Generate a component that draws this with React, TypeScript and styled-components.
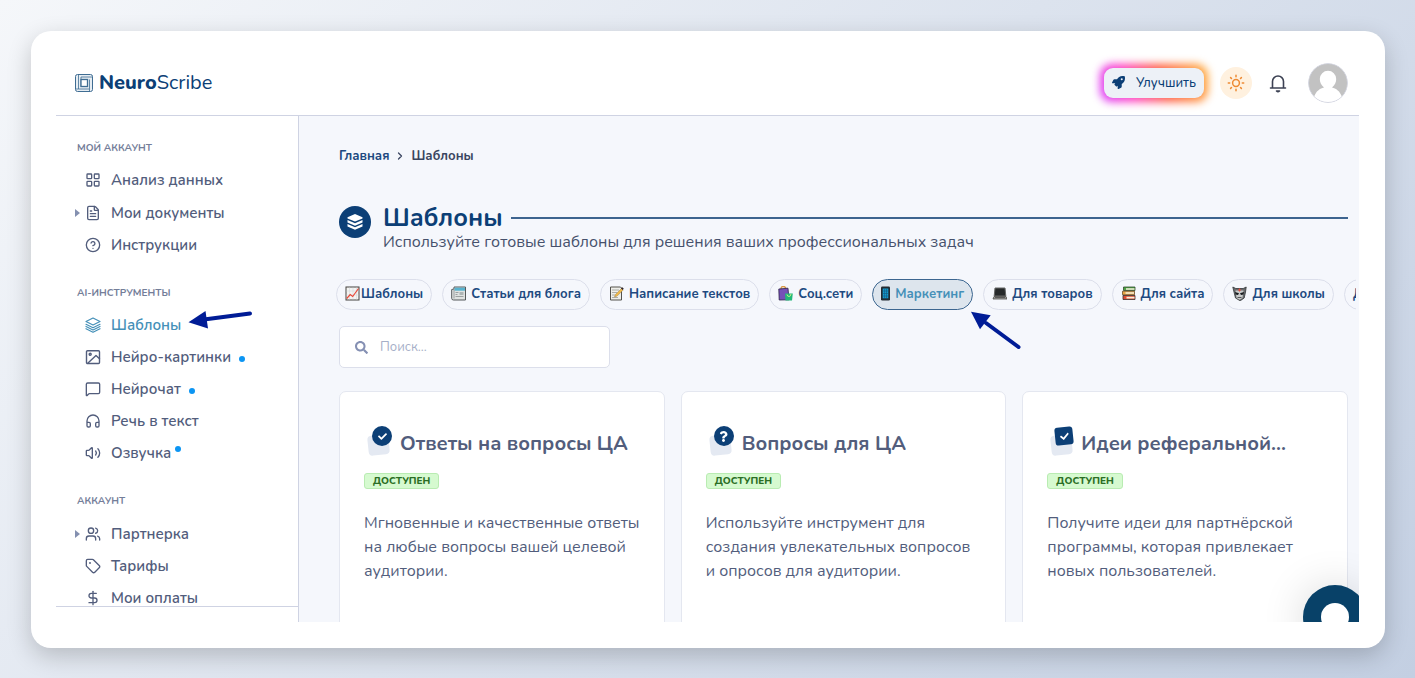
import React from "react";
import styled, { createGlobalStyle, css } from "styled-components";
import {
  ChevronRight, CircleHelp, DollarSign, FileText, Headphones, LayoutGrid,
  MessageSquare, Tag, Users, Volume2,
} from "lucide-react";
import { FaCheck, FaQuestion, FaRocket, FaSearch } from "react-icons/fa";

const navy = "#0c3f76";
const ink = "#525d7c";
const line = "#cfd3e3";
const accent = "#4590b8";
const annotation = "#001c96";

const GlobalStyle = createGlobalStyle`
  *, *::before, *::after { box-sizing: border-box; }
  body {
    margin: 0;
    font-family: Nunito, "Open Sans", "Noto Sans", sans-serif;
    color: ${ink};
  }
  button, input { font-family: inherit; }
  h1, h2, h3, p, ul, ol { margin: 0; padding: 0; }
  ul, ol { list-style: none; }
  a { color: inherit; text-decoration: none; }
`;

const Backdrop = styled.div`
  display: flex;
  height: 100vh;
  padding: 31px 30px 30px 31px;
  background: linear-gradient(135deg, #f5f7fa 0%, #c3cfe2 100%);
`;

const Frame = styled.div`
  flex: 1;
  display: flex;
  min-width: 0;
  padding: 19px 26px 26px 25px;
  border-radius: 20px;
  background: #fff;
  box-shadow: 0 8px 24px rgba(0, 0, 0, 0.2);
`;

const Shell = styled.div`
  position: relative;
  flex: 1;
  display: flex;
  flex-direction: column;
  min-width: 0;
  overflow: hidden;
`;

const Header = styled.header`
  display: flex;
  flex-shrink: 0;
  align-items: center;
  justify-content: space-between;
  height: 66px;
  padding: 0 11px 0 19px;
  border-bottom: 1px solid ${line};
`;

const Brand = styled.a`
  display: flex;
  align-items: center;
  gap: 4px;
  font-size: 20px;
  line-height: 28px;
  color: ${navy};

  b { font-weight: 800; }
`;

const HeaderActions = styled.div`
  display: flex;
  align-items: center;
`;

const UpgradeButton = styled.button`
  position: relative;
  display: flex;
  align-items: center;
  justify-content: space-between;
  width: 100px;
  height: 30px;
  margin-right: 16px;
  padding: 0 8px;
  border: 0;
  border-radius: 9px;
  background: #edf1f7;
  color: ${navy};
  font-size: 13px;
  font-weight: 500;
  isolation: isolate;

  &::before {
    content: "";
    position: absolute;
    inset: -4px;
    z-index: -2;
    border-radius: 12px;
    background: linear-gradient(70deg, #d63bff 0%, #ff3fc4 28%, #ff5f43 58%, #ffb23c 100%);
    filter: blur(4px);
  }
  &::after {
    content: "";
    position: absolute;
    inset: 0;
    z-index: -1;
    border-radius: 9px;
    background: #edf1f7;
  }
`;

const RoundButton = styled.button<{ $tint?: string; $color: string }>`
  display: grid;
  place-items: center;
  width: 32px;
  height: 32px;
  padding: 0;
  border: 0;
  border-radius: 50%;
  background: ${(p) => p.$tint ?? "transparent"};
  color: ${(p) => p.$color};
`;

const BellButton = styled(RoundButton)`
  margin: 0 14px 0 10px;
`;

const AvatarButton = styled(RoundButton)`
  width: 40px;
  height: 40px;
  overflow: hidden;
`;

const Body = styled.div`
  flex: 1;
  display: flex;
  min-height: 0;
`;

const Sidebar = styled.aside`
  display: flex;
  flex-direction: column;
  flex: 0 0 243px;
  border-right: 1px solid ${line};
`;

const Nav = styled.nav`
  flex: 1;
  display: flex;
  flex-direction: column;
  gap: 24px;
  min-height: 0;
  padding-top: 24px;
  overflow: clip;
`;

const SidebarFooter = styled.div`
  height: 16px;
  border-top: 1px solid ${line};
`;

const GroupLabel = styled.h3`
  margin-bottom: 8px;
  padding-left: 21px;
  font-size: 10px;
  line-height: 16px;
  font-weight: 700;
  text-transform: uppercase;
  color: #747e99;
`;

const NavLink = styled.a<{ $active?: boolean; $nested?: boolean }>`
  position: relative;
  display: grid;
  grid-template-columns: 10px 16px auto auto;
  justify-content: start;
  align-items: center;
  height: ${(p) => (p.$nested ? 33 : 32)}px;
  padding-left: 19px;
  font-size: 15px;
  line-height: 20px;
  font-weight: 600;
  color: ${(p) => (p.$active ? accent : ink)};
`;

const Caret = styled.span<{ $shown?: boolean }>`
  visibility: ${(p) => (p.$shown ? "visible" : "hidden")};
  width: 0;
  border: 4px solid transparent;
  border-left: 5px solid #8490b0;
  border-right: 0;
`;

const NavText = styled.span`
  padding-left: 10px;
`;

const Dot = styled.span<{ $raised?: boolean }>`
  width: 6px;
  height: 6px;
  border-radius: 50%;
  background: #0c95f3;
  ${(p) => (p.$raised
    ? css`margin: 0 0 8px 4px;`
    : css`margin: 4px 0 0 8px;`)}
`;

const NavArrow = styled.svg`
  position: absolute;
  left: 130px;
  top: -1px;
`;

const TabArrow = styled.svg`
  position: absolute;
  left: 96px;
  top: 29px;
  z-index: 1;
`;

const Main = styled.main`
  flex: 1;
  min-width: 0;
  padding: 31px 11px 0 40px;
  overflow: hidden;
  background: #f5f7fc;
`;

const Breadcrumbs = styled.ol`
  display: flex;
  align-items: center;
  gap: 5px;
  font-size: 13px;
  line-height: 18px;
  font-weight: 700;
  color: #3a4560;
`;

const Crumb = styled.li<{ $link?: boolean }>`
  display: flex;
  align-items: center;
  gap: 5px;
  color: ${(p) => (p.$link ? "#204980" : "inherit")};
`;

const PageHead = styled.div`
  display: flex;
  gap: 12px;
  margin-top: 39px;
`;

const HeadIcon = styled.span`
  display: grid;
  place-items: center;
  flex: 0 0 32px;
  height: 32px;
  margin-top: 2px;
  border-radius: 50%;
  background: ${navy};
`;

const HeadText = styled.div`
  flex: 1;
`;

const TitleRow = styled.div`
  display: flex;
  align-items: center;
  gap: 8px;

  &::after {
    content: "";
    flex: 1;
    height: 2px;
    background: #3d648f;
  }
`;

const Title = styled.h1`
  font-size: 25px;
  line-height: 28px;
  font-weight: 700;
  color: ${navy};
`;

const Subtitle = styled.p`
  font-size: 16px;
  line-height: 20px;
  color: #46516c;
`;

const Tabs = styled.div`
  display: flex;
  gap: 10px;
  margin: 27px -8px 0 -3px;
  overflow-x: clip;
`;

const Tab = styled.button<{ $active?: boolean; $tight?: boolean }>`
  position: relative;
  display: flex;
  flex-shrink: 0;
  align-items: center;
  gap: ${(p) => (p.$tight ? 1 : 5)}px;
  height: 31px;
  padding: 0 8px 2px;
  border: 1px solid ${(p) => (p.$active ? "#3c6690" : "#dcdfeb")};
  border-radius: 16px;
  background: ${(p) => (p.$active ? "#dde5ed" : "transparent")};
  color: ${(p) => (p.$active ? accent : "#204980")};
  font-size: 13px;
  font-weight: 700;
  white-space: nowrap;
`;

const SearchBox = styled.label`
  display: flex;
  align-items: center;
  gap: 12px;
  width: 271px;
  height: 42px;
  margin-top: 16px;
  padding: 0 15px;
  border: 1px solid #dcdfeb;
  border-radius: 5px;
  background: #fff;
  color: #8590b3;
`;

const SearchInput = styled.input`
  flex: 1;
  min-width: 0;
  padding: 0;
  border: 0;
  outline: 0;
  background: transparent;
  font-size: 13px;
  line-height: 20px;
  color: ${ink};

  &::placeholder { color: #a6afc8; opacity: 1; }
`;

const Cards = styled.div`
  display: grid;
  grid-template-columns: repeat(3, minmax(0, 1fr));
  gap: 16px;
  margin-top: 23px;
`;

const Card = styled.article`
  min-height: 290px;
  padding: 33px 24px 24px;
  border: 1px solid #e4e7f0;
  border-radius: 7px;
  background: #fff;
`;

const CardHead = styled.div`
  display: flex;
  align-items: center;
  gap: 8px;
  height: 32px;
  padding-left: 3px;
`;

const CardTitle = styled.h2`
  margin-top: 6px;
  font-size: 20px;
  line-height: 28px;
  font-weight: 700;
  white-space: nowrap;
  overflow: hidden;
  text-overflow: ellipsis;
`;

const CardMark = styled.span<{ $square?: boolean }>`
  position: relative;
  flex: 0 0 ${(p) => (p.$square ? 23 : 25)}px;
  height: 30px;

  &::before {
    content: "";
    position: absolute;
    left: 1px;
    bottom: 1px;
    width: 21px;
    height: 20px;
    border-radius: 4px;
    background: #e4e9f2;
    transform: rotate(-6deg);
  }
`;

const CardBadge = styled.span<{ $square?: boolean }>`
  position: absolute;
  top: ${(p) => (p.$square ? 1 : 0)}px;
  right: 0;
  display: grid;
  place-items: center;
  width: ${(p) => (p.$square ? 18 : 20)}px;
  height: ${(p) => (p.$square ? 18 : 20)}px;
  border-radius: ${(p) => (p.$square ? "3px" : "50%")};
  transform: ${(p) => (p.$square ? "rotate(-6deg)" : "none")};
  background: ${navy};
  color: #fff;
`;

const Status = styled.span`
  display: inline-block;
  vertical-align: top;
  margin-top: 16px;
  padding: 0 8px;
  border: 1px solid #b9ecb2;
  border-radius: 3px;
  background: #d6fad0;
  color: #2b6e25;
  font-size: 10px;
  line-height: 14px;
  font-weight: 800;
  text-transform: uppercase;
`;

const CardText = styled.p`
  margin-top: 22px;
  font-size: 16px;
  line-height: 24px;
`;

const ChatButton = styled.button`
  position: absolute;
  right: -8px;
  bottom: -27px;
  display: grid;
  place-items: center;
  width: 64px;
  height: 64px;
  padding: 0;
  border: 0;
  border-radius: 50%;
  background: #084168;
  box-shadow: 0 2px 44px rgba(0, 0, 0, 0.16);

  &::before {
    content: "";
    width: 28px;
    height: 28px;
    border-radius: 50%;
    background: #fff;
  }
`;

const LogoMark = () => (
  <svg width="20" height="20" viewBox="0 0 20 20" fill="none" stroke="#3f6d93" aria-hidden="true">
    <rect x="0.5" y="1.5" width="17" height="17" rx="2" fill="#e6edf3" />
    <path d="M3.500 1.500V16H14M17.500 4H6v9.500M14.500 18.500V6.500M.5 16h3" strokeWidth=".8" />
    <rect x="6" y="6.500" width="6.500" height="7" fill="#fff" strokeWidth="1.300" />
  </svg>
);

const StackIcon = () => (
  <svg width="16" height="16" viewBox="0 0 16 16" fill="none" stroke="currentColor" strokeWidth="1.200" strokeLinejoin="round" strokeLinecap="round" aria-hidden="true">
    <path d="M8 1 15 4.500 8 8 1 4.500zM1 7.300l7 3.500 7-3.500M1 9.500 8 13l7-3.500M1 11.700l7 3.500 7-3.500" />
  </svg>
);

const PictureIcon = () => (
  <svg width="16" height="16" viewBox="0 0 16 16" fill="none" stroke="currentColor" strokeWidth="1.400" strokeLinejoin="round" strokeLinecap="round" aria-hidden="true">
    <rect x="1.500" y="1.700" width="13" height="12.800" rx="1" />
    <circle cx="5.200" cy="5.200" r="1" />
    <path d="m3 14 8-7.500 3.500 3.200" />
  </svg>
);

const SunIcon = () => (
  <svg width="18" height="18" viewBox="0 0 18 18" fill="none" stroke="currentColor" strokeWidth="1.500" strokeLinecap="round" aria-hidden="true">
    <circle cx="9" cy="9" r="3.400" />
    <path d="M9 1.300v1.400M9 15.300v1.400M1.300 9h1.400M15.300 9h1.400M3.600 3.600l.9.9M13.500 13.500l.9.9M3.600 14.400l.9-.9M13.500 4.500l.9-.9" />
  </svg>
);

const BellIcon = () => (
  <svg width="20" height="20" viewBox="0 0 20 20" fill="none" stroke="currentColor" strokeWidth="1.600" strokeLinecap="round" strokeLinejoin="round" aria-hidden="true">
    <path d="M2.500 15h15M4.500 15V8.500a5.500 5.500 0 0 1 11 0V15" />
    <path d="M8.500 18a2 1.500 0 0 0 3 0z" fill="currentColor" />
  </svg>
);

const AvatarIcon = () => (
  <svg width="40" height="40" viewBox="0 0 40 40" aria-hidden="true">
    <circle cx="20" cy="20" r="19.500" fill="#c2c2c2" />
    <path d="M6 34C8 28 12 25.500 16 24.500 13 22 11.800 19 11.800 16a8.200 8.200 0 0 1 16.400 0c0 3-1.200 6-4.200 8.500 4 1 8 3.500 10 9.500a19.500 19.500 0 0 1-28 0z" fill="#fff" />
    <circle cx="20" cy="20" r="19.500" fill="none" stroke="#d5d7e2" />
  </svg>
);

const HeadStack = () => (
  <svg width="18" height="18" viewBox="0 0 18 18" fill="#fff" aria-hidden="true">
    <path d="M9 1 16.500 4.200v1.200L9 8.600 1.500 5.400V4.200zM1.500 7 9 10.200 16.500 7v2.500L9 12.700 1.500 9.500zM1.500 11.100 9 14.300l7.500-3.200v2.500L9 16.800l-7.500-3.200z" />
  </svg>
);

const emoji: Record<string, React.ReactNode> = {
  chart: (
    <>
      <rect x="1" y="1" width="13" height="13" fill="#f4f4f2" stroke="#45423e" strokeWidth="1" />
      <path d="M4.500 1.500v12M8 1.500v12M11.500 1.500v12M1.500 5h12M1.500 9h12" stroke="#d4d8da" strokeWidth=".6" />
      <path d="m1.700 12.500 3.500-4 2.500 2 5.800-8" stroke="#e94736" strokeWidth="1.200" fill="none" />
    </>
  ),
  news: (
    <>
      <path d="M3 1h11.500v13H2.500Q.7 14 .7 12.300V3.500L3 3z" fill="#dfe2e1" stroke="#55595a" />
      <path d="M3.500 1.700H14v3H3.500z" fill="#58b3cf" />
      <path d="M3 3v9.500M4.500 6.500h3M4.500 8.500h2M4.500 10.500h8" stroke="#8a9191" strokeWidth=".8" />
      <path d="M8.500 6h4v3h-4z" fill="#aeb5b5" />
    </>
  ),
  memo: (
    <>
      <path d="M1.500 1h10l1 1v12h-11z" fill="#eeeee9" stroke="#54524d" />
      <path d="M3 4h7M3 6.500h5M3 9h3M3 11.500h6" stroke="#9b9c96" strokeWidth=".8" />
      <path d="m5.500 11 1-2.500 6-6 1.600 1.600-6 6z" fill="#f0b94a" stroke="#8e6e35" strokeWidth=".4" />
      <path d="m12 2.200 1.300-1 1.500 1.500-1.200 1.200z" fill="#30262a" />
    </>
  ),
  bags: (
    <>
      <path d="M3 3q0-2.500 2.300-2.500T8 3" fill="none" stroke="#d99846" strokeWidth="1.400" />
      <path d="m.8 3 9.200-.8 1 11.600-9.800.2z" fill="#7650b8" stroke="#2b2148" strokeWidth=".8" />
      <path d="M7 7.500h7.800L14 14.500H7.500z" fill="#22b878" />
      <path d="M9 8.500q.3 2 2 2t2-2.500" fill="none" stroke="#c3ef88" />
    </>
  ),
  phone: (
    <>
      <rect x="0" y=".5" width="9" height="14" rx="1.300" fill="#222b32" />
      <path d="M1.700 2.500h5.600v9.800H1.700z" fill="#139cd0" />
      <path d="M3.600 3v9M5.500 3v9M1.700 5h5.600M1.700 7.500h5.600M1.700 10h5.600" stroke="#14577e" strokeWidth=".6" />
    </>
  ),
  laptop: (
    <>
      <path d="M3 2h10l.8 8H2.200z" fill="#26292a" stroke="#656766" />
      <path d="M2 10.500h12l1 2.500H1z" fill="#9d9d9b" stroke="#4c4c49" strokeWidth=".8" />
      <path d="M3 11.500h10" stroke="#3e3e3d" strokeWidth=".7" />
    </>
  ),
  books: (
    <>
      <path d="M2.500 1H14v3.500H2.500z" fill="#4ba243" stroke="#33492e" strokeWidth=".8" />
      <path d="M1.500 5.200h12v3.600h-12z" fill="#e7a640" stroke="#6b4b2a" strokeWidth=".8" />
      <path d="M2 9.500h12v4H2z" fill="#dd4e36" stroke="#392f2b" strokeWidth=".8" />
      <path d="M5 2.200h8.500v1.500H5zM4.500 6.300H13v1.400H4.500zM5.500 10.700h8v1.800h-8z" fill="#f6efdb" />
    </>
  ),
  mask: (
    <>
      <path d="m.8 1 3 1.500h7.400l3-1.500-.7 5-1.300 6-4 2.800-4.700-2.800L2 6z" fill="#686b6d" stroke="#323638" strokeWidth=".8" />
      <path d="M3.500 4.500h8L10.500 12l-3 1.700-3-1.700z" fill="#c7c9c9" />
      <path d="m3 6 4 1.200L6 9 3.600 8.500zM12 6 8 7.200 9 9l2.400-.5z" fill="#171b1e" />
      <path d="M7.500 2.500v3M6 4h3" stroke="#e24c3e" />
      <path d="M5.500 11.500h4" stroke="#55585a" />
    </>
  ),
};

const Emoji = ({ name }: { name: string }) => {
  const width = name === "phone" ? 9 : 15;
  return (
    <svg width={width} height="15" viewBox={`0 0 ${width} 15`} aria-hidden="true">{emoji[name]}</svg>
  );
};

const lucide = { size: 16, strokeWidth: 2 };

type NavEntry = {
  label: string;
  icon: React.ReactNode;
  nested?: boolean;
  active?: boolean;
  dot?: "low" | "raised";
};

const groups: { label: string; items: NavEntry[] }[] = [
  {
    label: "Мой аккаунт",
    items: [
      { label: "Анализ данных", icon: <LayoutGrid {...lucide} /> },
      { label: "Мои документы", icon: <FileText {...lucide} />, nested: true },
      { label: "Инструкции", icon: <CircleHelp {...lucide} /> },
    ],
  },
  {
    label: "AI-инструменты",
    items: [
      { label: "Шаблоны", icon: <StackIcon />, active: true },
      { label: "Нейро-картинки", icon: <PictureIcon />, dot: "low" },
      { label: "Нейрочат", icon: <MessageSquare {...lucide} />, dot: "low" },
      { label: "Речь в текст", icon: <Headphones {...lucide} /> },
      { label: "Озвучка", icon: <Volume2 {...lucide} />, dot: "raised" },
    ],
  },
  {
    label: "Аккаунт",
    items: [
      { label: "Партнерка", icon: <Users {...lucide} />, nested: true },
      { label: "Тарифы", icon: <Tag {...lucide} /> },
      { label: "Мои оплаты", icon: <DollarSign {...lucide} /> },
    ],
  },
];

const tabs = [
  { label: "Шаблоны", icon: "chart", tight: true },
  { label: "Статьи для блога", icon: "news" },
  { label: "Написание текстов", icon: "memo" },
  { label: "Соц.сети", icon: "bags" },
  { label: "Маркетинг", icon: "phone", active: true },
  { label: "Для товаров", icon: "laptop" },
  { label: "Для сайта", icon: "books" },
  { label: "Для школы", icon: "mask" },
  { label: "Другое" },
];

const cards = [
  {
    title: "Ответы на вопросы ЦА",
    icon: <FaCheck size={9} />,
    text: "Мгновенные и качественные ответы на любые вопросы вашей целевой аудитории.",
  },
  {
    title: "Вопросы для ЦА",
    icon: <FaQuestion size={11} />,
    text: "Используйте инструмент для создания увлекательных вопросов и опросов для аудитории.",
  },
  {
    title: "Идеи реферальной...",
    icon: <FaCheck size={9} />,
    square: true,
    text: "Получите идеи для партнёрской программы, которая привлекает новых пользователей.",
  },
];

export default function App() {
  return (
    <>
      <GlobalStyle />
      <Backdrop>
        <Frame>
          <Shell>
            <Header>
              <Brand href="#">
                <LogoMark />
                <span><b>Neuro</b>Scribe</span>
              </Brand>
              <HeaderActions>
                <UpgradeButton type="button"><FaRocket size={13} />Улучшить</UpgradeButton>
                <RoundButton type="button" aria-label="Тема" $tint="#fff1df" $color="#ee8a33"><SunIcon /></RoundButton>
                <BellButton type="button" aria-label="Уведомления" $color="#3c4153"><BellIcon /></BellButton>
                <AvatarButton type="button" aria-label="Профиль" $color="#c2c2c2"><AvatarIcon /></AvatarButton>
              </HeaderActions>
            </Header>
            <Body>
              <Sidebar>
                <Nav>
                  {groups.map((group) => (
                    <section key={group.label}>
                      <GroupLabel>{group.label}</GroupLabel>
                      <ul>
                        {group.items.map((item) => (
                          <li key={item.label}>
                            <NavLink href="#" $active={item.active} $nested={item.nested}>
                              <Caret $shown={item.nested} />
                              {item.icon}
                              <NavText>{item.label}</NavText>
                              {item.dot && <Dot $raised={item.dot === "raised"} />}
                              {item.active && (
                                <NavArrow width="70" height="24" viewBox="0 0 70 24" aria-hidden="true">
                                  <path d="M18 11.500 64 5.500" stroke={annotation} strokeWidth="4" strokeLinecap="round" />
                                  <path d="m2.500 14.300 17-11.300 2.500 17.500z" fill={annotation} />
                                </NavArrow>
                              )}
                            </NavLink>
                          </li>
                        ))}
                      </ul>
                    </section>
                  ))}
                </Nav>
                <SidebarFooter />
              </Sidebar>
              <Main>
                <Breadcrumbs>
                  <Crumb $link><a href="#">Главная</a></Crumb>
                  <Crumb><ChevronRight size={12} strokeWidth={2.5} />Шаблоны</Crumb>
                </Breadcrumbs>
                <PageHead>
                  <HeadIcon><HeadStack /></HeadIcon>
                  <HeadText>
                    <TitleRow><Title>Шаблоны</Title></TitleRow>
                    <Subtitle>Используйте готовые шаблоны для решения ваших профессиональных задач</Subtitle>
                  </HeadText>
                </PageHead>
                <Tabs>
                  {tabs.map((tab) => (
                    <Tab key={tab.label} type="button" $active={tab.active} $tight={tab.tight}>
                      {tab.icon && <Emoji name={tab.icon} />}
                      {tab.label}
                      {tab.active && (
                        <TabArrow width="54" height="42" viewBox="0 0 54 42" aria-hidden="true">
                          <path d="M17 14 49.500 38" stroke={annotation} strokeWidth="4" strokeLinecap="round" />
                          <path d="M2 2.700 21.700 6.300 11 20.300z" fill={annotation} />
                        </TabArrow>
                      )}
                    </Tab>
                  ))}
                </Tabs>
                <SearchBox>
                  <FaSearch size={13} />
                  <SearchInput type="search" placeholder="Поиск..." aria-label="Поиск" />
                </SearchBox>
                <Cards>
                  {cards.map((card) => (
                    <Card key={card.title}>
                      <CardHead>
                        <CardMark $square={card.square}>
                          <CardBadge $square={card.square}>{card.icon}</CardBadge>
                        </CardMark>
                        <CardTitle>{card.title}</CardTitle>
                      </CardHead>
                      <Status>Доступен</Status>
                      <CardText>{card.text}</CardText>
                    </Card>
                  ))}
                </Cards>
              </Main>
            </Body>
            <ChatButton type="button" aria-label="Чат" />
          </Shell>
        </Frame>
      </Backdrop>
    </>
  );
}
